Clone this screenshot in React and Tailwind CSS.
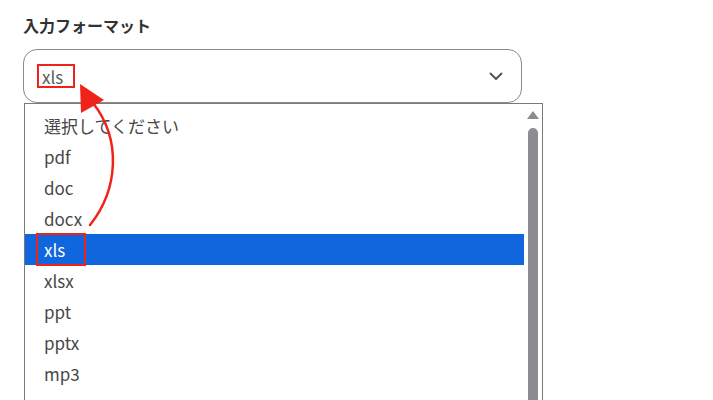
const options = ["選択してください", "pdf", "doc", "docx", "xls", "xlsx", "ppt", "pptx", "mp3"];

export default function App() {
    const selected = "xls";

    return (
        <div
            className="relative w-[713px] h-[400px] overflow-hidden bg-white"
            style={{ fontFamily: '"Noto Sans CJK JP", "Noto Sans", sans-serif' }}
        >
            <div className="pl-[23px] pt-[13px]">
                <div className="text-[16px] font-bold leading-[24px] text-[#333]">
                    入力フォーマット
                </div>
                <div className="mt-[12px] w-[499px] h-[54px] rounded-[14px] border border-[#8a8a8a] flex items-center justify-between pl-[13px] pr-[18px]">
                    <span className="border-2 border-[#f0231a] pl-[3px] w-[38px] h-[24px] flex items-center text-[17px] leading-none text-[#5c5c5c]">
                        xls
                    </span>
                    <svg width="14" height="9" viewBox="0 0 14 9" fill="none">
                        <path d="M1.5 1.5 L7 7 L12.5 1.5" stroke="#555" strokeWidth="2" strokeLinecap="round" strokeLinejoin="round" />
                    </svg>
                </div>
            </div>

            {/* open list */}
            <div className="absolute left-[24px] top-[103px] w-[519px] h-[310px] border border-[#7a7a7a] bg-white flex">
                <div className="flex-1 pt-[6px]">
                    {options.map((o) => (
                        <div
                            key={o}
                            className={
                                o === selected
                                    ? "h-[31px] flex items-center pl-[11px] bg-[#1066dc] text-white text-[17px]"
                                    : "h-[31px] flex items-center pl-[19px] text-[#474747] text-[17px]"
                            }
                        >
                            {o === selected ? (
                                <span className="border-2 border-[#f0231a] h-[33px] w-[50px] pl-[6px] flex items-center">
                                    {o}
                                </span>
                            ) : (
                                o
                            )}
                        </div>
                    ))}
                </div>
                <div className="w-[18px] flex flex-col items-center pt-[7px]">
                    <svg width="12" height="8" viewBox="0 0 12 8">
                        <path d="M6 0 L12 8 L0 8 Z" fill="#8c8a8e" />
                    </svg>
                    <div className="mt-[9px] w-[10px] flex-1 rounded-t-[5px] bg-[#8e8c90]" />
                </div>
            </div>

            {/* annotation arrow */}
            <svg className="absolute left-0 top-0" width="713" height="400" viewBox="0 0 713 400" fill="none">
                <path d="M90 225 C 118 190, 122 140, 93 103" stroke="#f0231a" strokeWidth="2.5" fill="none" strokeLinecap="round" />
                <path d="M80 84 L104 100 L81 113 Z" fill="#f0231a" />
            </svg>
        </div>
    );
}
